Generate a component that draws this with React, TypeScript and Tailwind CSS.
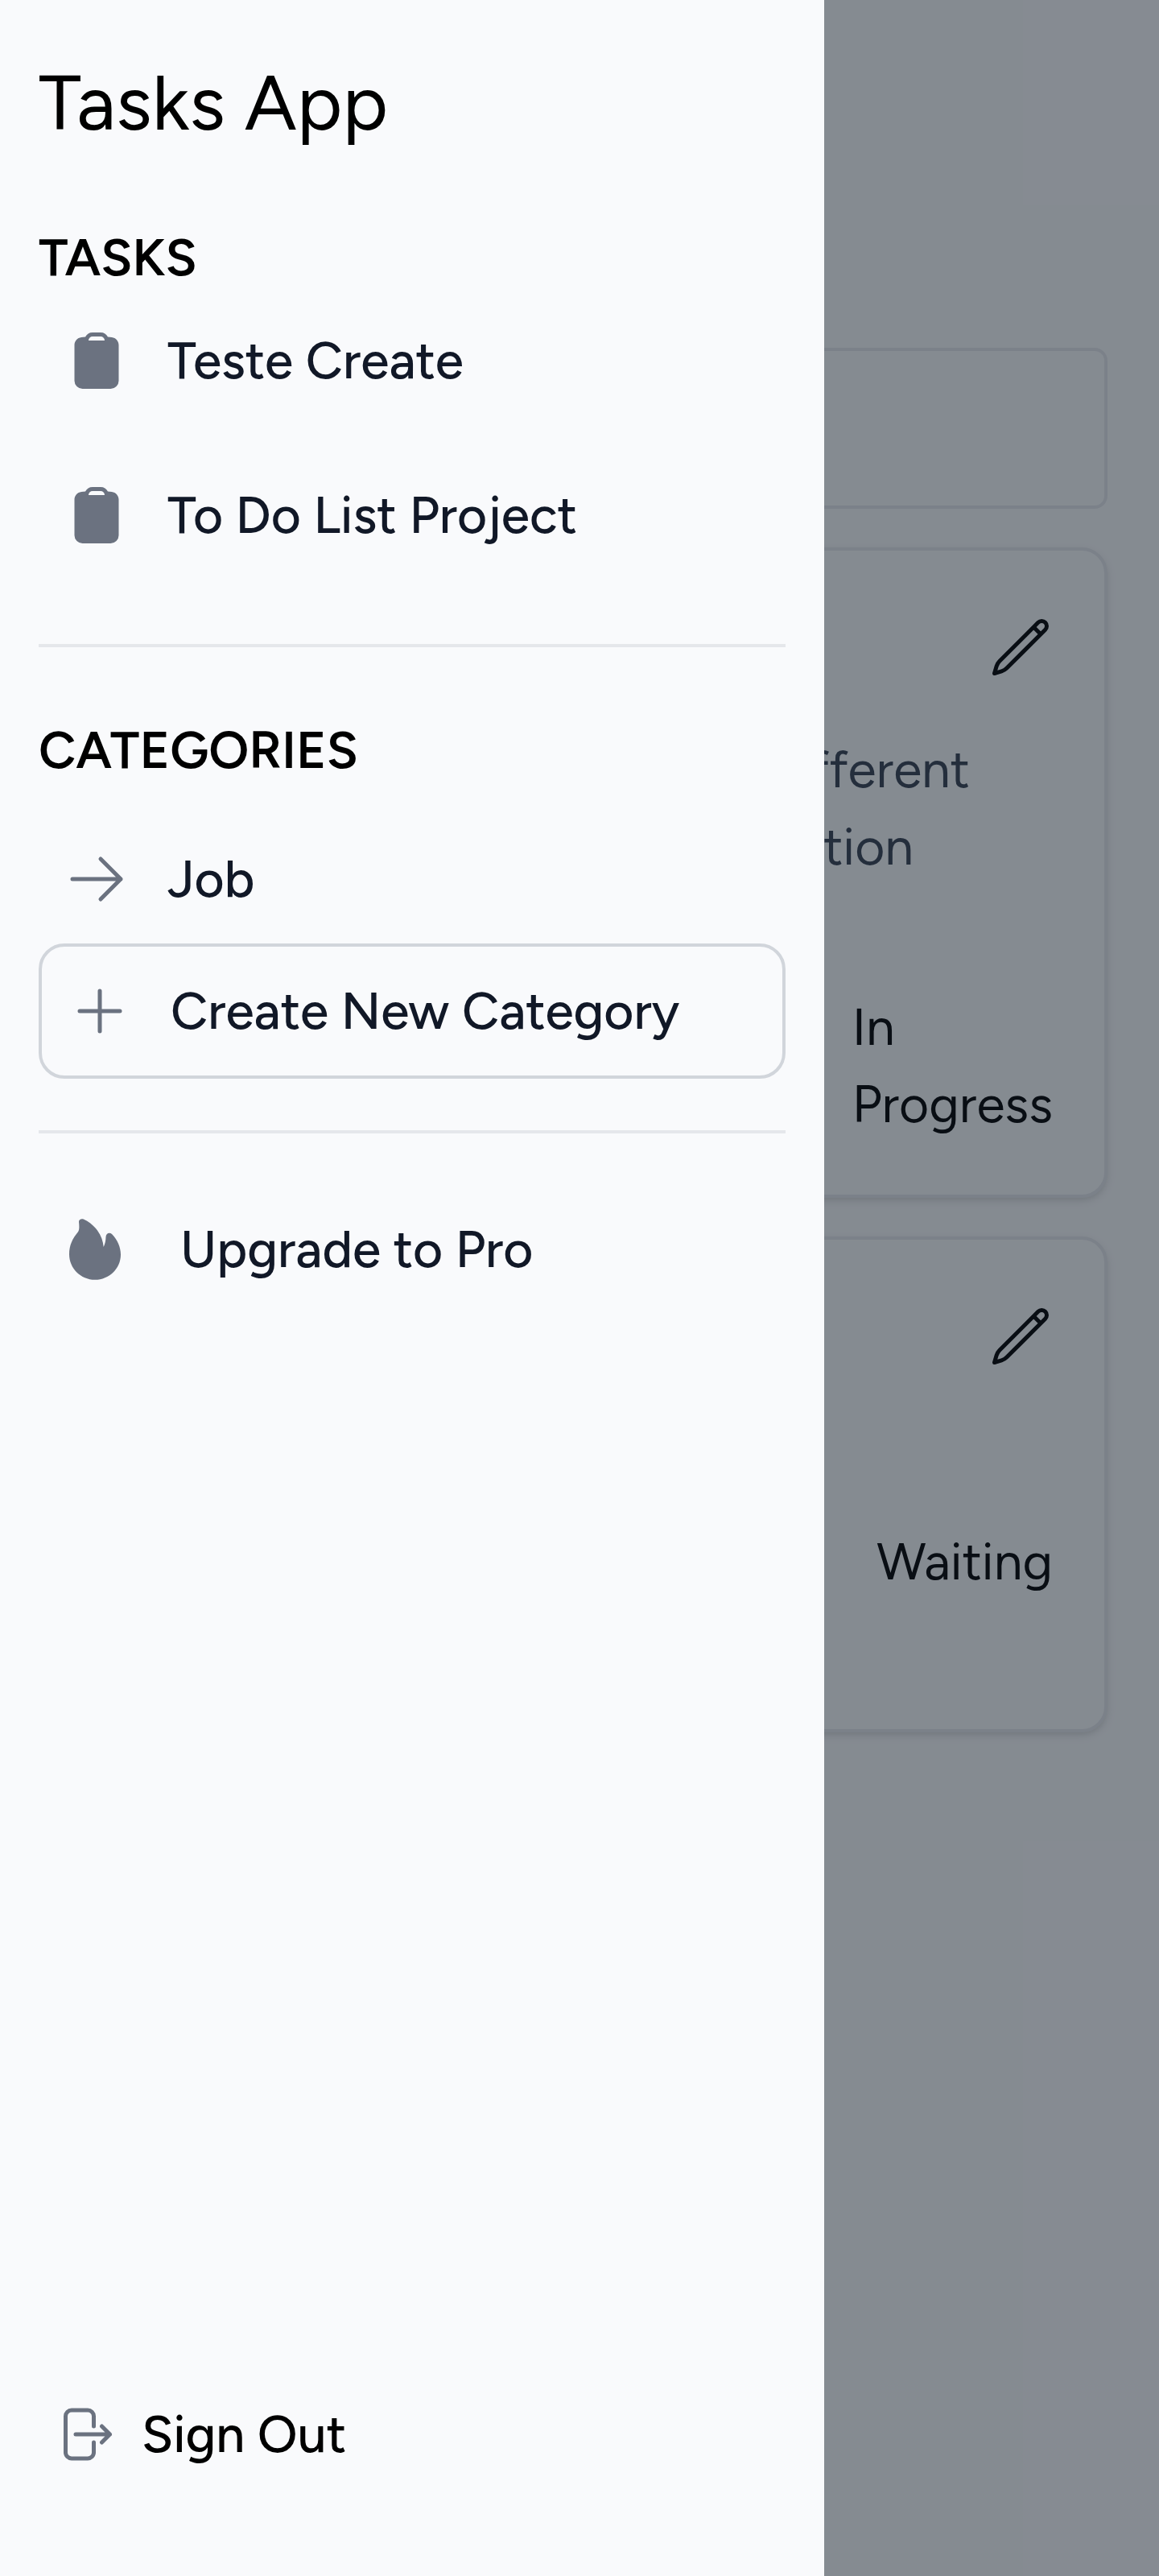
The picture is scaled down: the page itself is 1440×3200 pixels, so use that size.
import type { ReactNode } from 'react';

function Stroke({ d, className }: { d: string; className: string }) {
  return (
    <svg viewBox="0 0 24 24" fill="none" stroke="currentColor" strokeWidth={1.5} strokeLinecap="round" strokeLinejoin="round" className={`size-20 shrink-0 ${className}`}>
      <path d={d} />
    </svg>
  );
}

const ARROW = 'M13.5 4.5 21 12m0 0-7.5 7.5M21 12H3';
const PLUS = 'M12 4.5v15m7.5-7.5h-15';
const SIGN_OUT =
  'M15.75 9V5.25A2.25 2.25 0 0 0 13.5 3h-6a2.25 2.25 0 0 0-2.25 2.25v13.5A2.25 2.25 0 0 0 7.5 21h6a2.25 2.25 0 0 0 2.25-2.25V15m3 0 3-3m0 0-3-3m3 3H9';
const PENCIL =
  'm16.862 4.487 1.687-1.688a1.875 1.875 0 1 1 2.652 2.652L6.832 19.82a4.5 4.5 0 0 1-1.897 1.13l-2.685.8.8-2.685a4.5 4.5 0 0 1 1.13-1.897L16.863 4.487Zm0 0L19.5 7.125';

function Clipboard() {
  return (
    <svg viewBox="0 0 24 24" fill="currentColor" className="size-20 shrink-0 text-[#6b7280]">
      <path
        fillRule="evenodd"
        clipRule="evenodd"
        d="M10.5 3A1.501 1.501 0 0 0 9 4.5h6A1.5 1.5 0 0 0 13.5 3h-3Zm-2.693.178A3 3 0 0 1 10.5 1.5h3a3 3 0 0 1 2.694 1.678c.497.042.992.092 1.486.15 1.497.173 2.57 1.46 2.57 2.929V19.5a3 3 0 0 1-3 3H6.75a3 3 0 0 1-3-3V6.257c0-1.47 1.073-2.756 2.57-2.93.493-.057.989-.107 1.487-.15Z"
      />
    </svg>
  );
}

function Flame() {
  return (
    <svg viewBox="0 0 80 80" fill="currentColor" className="size-20 shrink-0 text-[#6b7280]">
      <path d="M18 6C17.8 3 20.5 1.6 23.7 2.4C31 5.6 37 11 41 16.5C45.8 23 48 30 48.7 37C50.6 33 51.4 29 51.5 24.5C51.7 20 56 18.2 59 21C66 28 70 37.5 70 46.5C70 64 55.5 77.8 38 77.8C20.3 77.8 6 63.5 6 46C6 35 10 26.5 17 18.2C18.8 15.5 18.5 11 18 6Z" />
    </svg>
  );
}

function Item({ icon, label, className = '' }: { icon: ReactNode; label: string; className?: string }) {
  return (
    <li className={`flex items-center p-8 font-medium text-[#111827] ${className}`}>
      {icon}
      <span>{label}</span>
    </li>
  );
}

function Card({ children, className }: { children: ReactNode; className: string }) {
  return (
    <section className={`flex flex-col items-end rounded-[32px] border-4 border-[#e5e7eb] p-16 pt-20 bg-[#f9fafb] shadow-[0_4px_12px_0_rgba(0,0,0,0.1),0_4px_8px_-4px_rgba(0,0,0,0.1)] ${className}`}>
      <Stroke d={PENCIL} className="text-black" />
      {children}
    </section>
  );
}

export default function App() {
  return (
    <div className="relative h-[3200px] w-[1440px] overflow-hidden bg-[#f9fafb] font-[Figtree,Lato,sans-serif] text-[64px] leading-[96px] text-black">
      <main className="flex flex-col gap-12 px-16 pt-[432px]">
        <div className="h-[200px] rounded-2xl border-4 border-[#e5e7eb]" />
        <Card className="h-[808px]">
          <div className="mt-16 flex flex-col items-end text-[#374151]">
            <p className="pr-[103px]">fferent</p>
            <p className="pr-[173px]">tion</p>
          </div>
          <p className="mt-32">
            In
            <br />
            Progress
          </p>
        </Card>
        <Card className="h-[616px]">
          <p className="mt-48">Waiting</p>
        </Card>
      </main>

      <div className="absolute inset-0 bg-[#121b28]/50" />

      <aside className="absolute inset-y-0 left-0 flex w-[1024px] flex-col bg-[#f9fafc] px-12 pt-16 pb-32">
        <h1 className="text-[96px] leading-[128px]">Tasks App</h1>
        <h2 className="mt-20 font-semibold">TASKS</h2>
        <ul className="flex flex-col gap-8">
          <Item icon={<Clipboard />} label="Teste Create" className="gap-12" />
          <Item icon={<Clipboard />} label="To Do List Project" className="gap-12" />
        </ul>
        <div className="mt-20 border-t-4 border-[#e5e7eb] pt-20">
          <h2 className="font-semibold">CATEGORIES</h2>
          <ul className="mt-8">
            <Item icon={<Stroke d={ARROW} className="text-[#6b7280]" />} label="Job" className="gap-12" />
            <Item
              icon={<Stroke d={PLUS} className="text-[#6b7280]" />}
              label="Create New Category"
              className="gap-12 rounded-[32px] border-4 border-[#d1d5db]"
            />
          </ul>
        </div>
        <ul className="mt-16 border-t-4 border-[#e5e7eb] pt-16">
          <Item icon={<Flame />} label="Upgrade to Pro" className="gap-16" />
        </ul>
        <button className="mt-auto flex items-center gap-8 pl-4 font-medium">
          <Stroke d={SIGN_OUT} className="text-[#6b7280]" />
          <span>Sign Out</span>
        </button>
      </aside>
    </div>
  );
}
